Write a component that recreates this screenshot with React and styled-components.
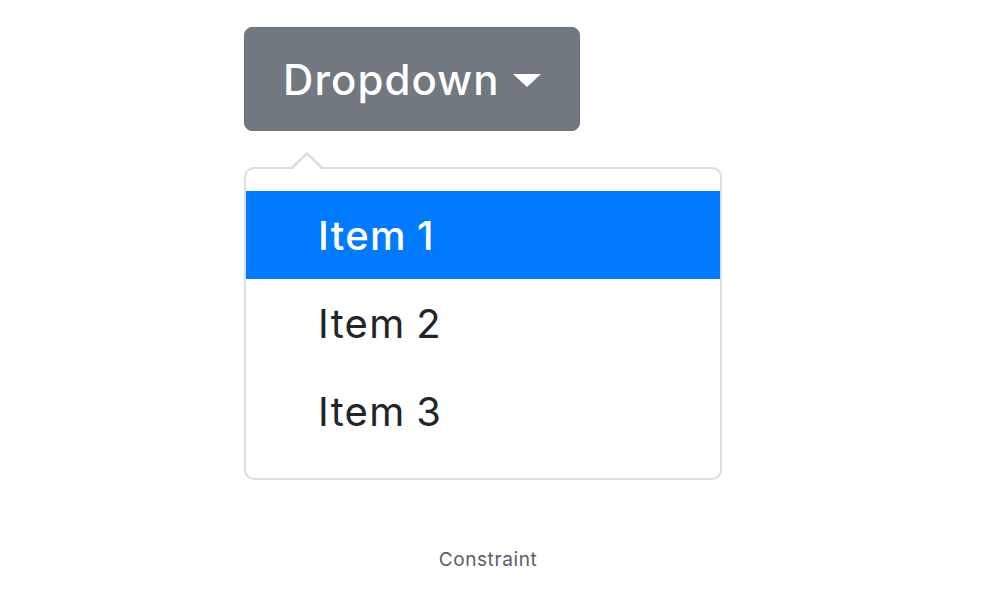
import React from 'react';
import styled, { createGlobalStyle } from 'styled-components';

const GlobalStyle = createGlobalStyle`
  html, body {
    margin: 0;
    padding: 0;
    background: #ffffff;
  }
  body {
    font-family: Inter, "Liberation Sans", sans-serif;
  }
`;

const Page = styled.div`
  width: 1003px;
  height: 592px;
  box-sizing: border-box;
  padding: 27px 0 0 244px;
  display: flex;
  flex-direction: column;
  align-items: flex-start;
`;

const ToggleButton = styled.button`
  display: flex;
  align-items: center;
  height: 104px;
  box-sizing: border-box;
  padding: 0 38px 0 38px;
  background: #717880;
  border: 1px solid #6c737a;
  border-radius: 8px;
  color: #ffffff;
  font-family: Inter, "Liberation Sans", sans-serif;
  font-size: 42px;
  font-weight: 500;
  letter-spacing: 1.1px;
  cursor: pointer;
`;

const Caret = styled.span`
  display: inline-block;
  width: 0;
  height: 0;
  margin-left: 13px;
  margin-top: 2px;
  border-top: 13px solid #ffffff;
  border-left: 14px solid transparent;
  border-right: 14px solid transparent;
`;

const Menu = styled.ul`
  position: relative;
  list-style: none;
  margin: 36px 0 0;
  padding: 22px 0 23px;
  width: 478px;
  box-sizing: border-box;
  border: 2px solid #dcdcdc;
  border-radius: 10px;
  background: #ffffff;

  &::before,
  &::after {
    content: '';
    position: absolute;
    width: 0;
    height: 0;
    border-style: solid;
  }
  &::before {
    left: 44px;
    top: -17px;
    border-width: 0 17px 16px 17px;
    border-color: transparent transparent #dcdcdc transparent;
  }
  &::after {
    left: 46px;
    top: -14px;
    border-width: 0 15px 15px 15px;
    border-color: transparent transparent #ffffff transparent;
  }
`;

const Item = styled.li`
  height: 88px;
  display: flex;
  align-items: center;
  padding-left: 72px;
  font-size: 40px;
  letter-spacing: 1.3px;
  word-spacing: -2px;
  font-weight: ${p => (p.active ? 500 : 400)};
  color: ${p => (p.active ? '#ffffff' : '#212529')};
  background: ${p => (p.active ? '#007bff' : 'transparent')};
`;

const Caption = styled.div`
  margin: 68px 0 0 -244px;
  width: 976px;
  text-align: center;
  font-family: Inter, "Liberation Sans", sans-serif;
  font-size: 19px;
  letter-spacing: 0.6px;
  color: #5a6068;
`;

const items = ['Item 1', 'Item 2', 'Item 3'];

export default function App() {
  return (
    <>
      <GlobalStyle />
      <Page>
        <ToggleButton>
          Dropdown
          <Caret />
        </ToggleButton>
        <Menu>
          {items.map((label, i) => (
            <Item key={label} active={i === 0}>
              {label}
            </Item>
          ))}
        </Menu>
        <Caption>Constraint</Caption>
      </Page>
    </>
  );
}
